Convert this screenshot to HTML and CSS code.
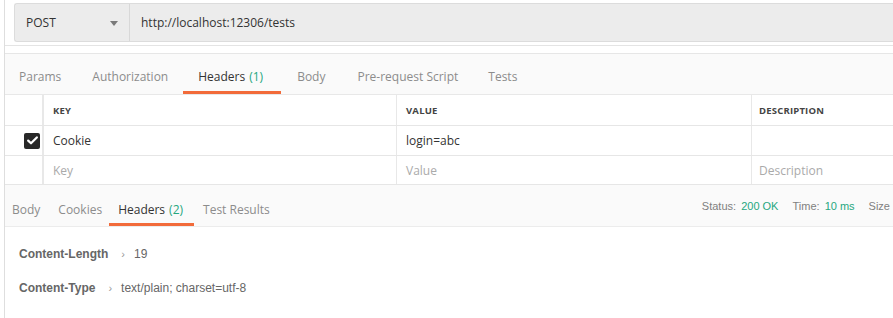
FILE: index.html
```html
<!DOCTYPE html>
<html>
<head>
<meta charset="utf-8">
<link rel="stylesheet" href="styles.css">
</head>
<body>
<div class="app">
  <div class="req">
    <div class="urlbar">
      <div class="method"><span>POST</span><svg class="caret" width="8" height="5" viewBox="0 0 8 5"><path d="M0 0 L8 0 L4 5 Z" fill="#7a7a7a"/></svg></div>
      <div class="url">http://localhost:12306/tests</div>
    </div>
  </div>
  <div class="gapline"></div>
  <div class="tabs reqtabs">
    <div class="tab">Params</div>
    <div class="tab">Authorization</div>
    <div class="tab active">Headers <span class="count">(1)</span></div>
    <div class="tab">Body</div>
    <div class="tab">Pre-request Script</div>
    <div class="tab">Tests</div>
  </div>
  <div class="table">
    <div class="row head">
      <div class="cell chk"></div>
      <div class="cell key">KEY</div>
      <div class="cell val">VALUE</div>
      <div class="cell desc">DESCRIPTION</div>
    </div>
    <div class="row">
      <div class="cell chk"><span class="box"><svg width="11" height="9" viewBox="0 0 11 9"><path d="M1.2 4.6 L4 7.3 L9.8 1.4" stroke="#fff" stroke-width="2.2" fill="none" stroke-linecap="round" stroke-linejoin="round"/></svg></span></div>
      <div class="cell key">Cookie</div>
      <div class="cell val">login=abc</div>
      <div class="cell desc"></div>
    </div>
    <div class="row last">
      <div class="cell chk"></div>
      <div class="cell key ph">Key</div>
      <div class="cell val ph">Value</div>
      <div class="cell desc ph">Description</div>
    </div>
  </div>
  <div class="restabs">
    <div class="tabs">
      <div class="tab">Body</div>
      <div class="tab">Cookies</div>
      <div class="tab active">Headers <span class="count">(2)</span></div>
      <div class="tab">Test Results</div>
    </div>
    <div class="meta">
      <span>Status: <b class="ok">200 OK</b></span>
      <span>Time: <b class="ok">10 ms</b></span>
      <span>Size</span>
    </div>
  </div>
  <div class="resbody">
    <div class="hdr"><span class="hk">Content-Length</span><span class="sep">›</span><span class="hv">19</span></div>
    <div class="hdr"><span class="hk">Content-Type</span><span class="sep">›</span><span class="hv">text/plain; charset=utf-8</span></div>
  </div>
</div>
</body>
</html>
```
FILE: styles.css
```css
html, body {
  margin: 0;
  padding: 0;
  background: #fff;
  overflow: hidden;
}
body {
  width: 893px;
  height: 318px;
  font-family: "Open Sans", "Liberation Sans", sans-serif;
  font-size: 12px;
  color: #505050;
}
.app {
  margin-left: 4px;
  border-left: 1px solid #dedede;
  height: 318px;
  width: 900px;
  background: #fff;
}
.req {
  padding: 3px 0 0 9px;
}
.urlbar {
  display: flex;
  height: 37px;
  background: #ececec;
  border: 1px solid #dcdcdc;
  border-right: none;
  border-radius: 3px 0 0 3px;
}
.method {
  width: 115px;
  flex: none;
  border-right: 1px solid #d8d8d8;
  display: flex;
  align-items: center;
  justify-content: space-between;
  padding: 0 11px 0 11px;
  box-sizing: border-box;
  color: #333;
  font-size: 12px;
}
.caret { margin-top: 1px; }
.url {
  display: flex;
  align-items: center;
  padding-left: 11px;
  color: #333;
}
.gapline {
  margin-top: 3px;
  height: 7px;
  border-top: 1px solid #e4e4e4;
}
.tabs {
  display: flex;
  align-items: stretch;
}
.reqtabs {
  background: #fafafa;
  border-top: 1px solid #e6e6e6;
  border-bottom: 1px solid #e8e8e8;
  height: 40px;
}
.tab {
  color: #8c8c8c;
  display: flex;
  align-items: center;
  padding: 7px 16px 0;
  box-sizing: border-box;
  border-bottom: 3px solid transparent;
  white-space: nowrap;
}
.reqtabs .tab:first-child { padding-left: 14px; padding-right: 15px; }
.reqtabs .tab:nth-child(2) { padding-right: 15px; }
.reqtabs .tab.active { padding-left: 15px; padding-right: 18px; }
.reqtabs .tab:nth-child(4) { padding-right: 16px; }
.reqtabs .tab:nth-child(5) { padding-right: 14px; }
.tab.active {
  color: #333;
  border-bottom-color: #f26b3a;
}
.count { color: #26a77f; margin-left: 4px; }

.table { background: #fff; }
.row {
  display: flex;
  height: 29px;
  border-bottom: 1px solid #e6e6e6;
}
.row.head { height: 30px; }
.row.last { height: 28px; }
.cell {
  display: flex;
  align-items: center;
  box-sizing: border-box;
  color: #333;
  padding-left: 9px;
}
.chk {
  width: 39px;
  border-right: 2px solid #e8e8e8;
  justify-content: flex-end;
  padding: 0 2px 0 0;
}
.key { width: 353px; border-right: 1px solid #e8e8e8; }
.val { width: 355px; border-right: 1px solid #e8e8e8; padding-left: 9px; }
.desc { flex: 1; padding-left: 7px; }
.head .cell {
  font-size: 9.5px;
  font-weight: 700;
  color: #444;
  letter-spacing: 0.2px;
}
.ph { color: #aaa; }
.box {
  width: 16px;
  height: 16px;
  background: #282828;
  border-radius: 2px;
  display: flex;
  align-items: center;
  justify-content: center;
}

.restabs {
  display: flex;
  justify-content: space-between;
  background: #fafafa;
  border-bottom: 1px solid #ececec;
  height: 41px;
}
.restabs .tab { padding: 11px 9px 0; }
.restabs .tab:first-child { padding-left: 7px; }
.restabs .tab:nth-child(2) { padding-right: 7px; }
.restabs .tab.active { padding-left: 9px; padding-right: 11px; }
.meta {
  display: flex;
  align-items: center;
  font-family: "Liberation Sans", Arial, sans-serif;
  font-size: 11px;
  color: #808080;
  gap: 14px;
  padding-top: 1px;
  margin-right: 15px;
}
.meta b { font-weight: 400; }
.ok { color: #26a77f; margin-left: 2px; }

.resbody {
  padding: 10px 0 0 14px;
  font-family: "Liberation Sans", Arial, sans-serif;
  font-size: 12px;
}
.hdr {
  height: 34px;
  display: flex;
  align-items: center;
}
.hk { font-weight: 700; color: #666; }
.sep { color: #999; margin: 0 9px 0 13px; font-size: 11px; }
.hv { color: #666; }
```
